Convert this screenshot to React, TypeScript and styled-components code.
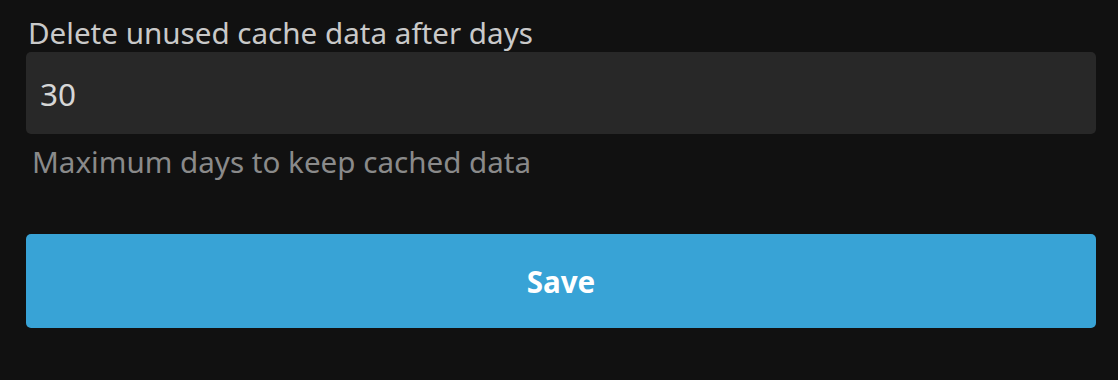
import styled, { createGlobalStyle } from 'styled-components'

const Global = createGlobalStyle`
html, body {
margin: 0;
padding: 0;
background-color: #111111;
}
body {
font-family: "Noto Sans", "Open Sans", sans-serif;
}
`

const Page = styled.div`
width: 1118px;
height: 380px;
box-sizing: border-box;
padding: 13px 22px 0 26px;
display: flex;
flex-direction: column;
`

const Field = styled.div`
display: flex;
flex-direction: column;
`

const Label = styled.label`
font-size: 29.6px;
line-height: 39px;
color: #c9c9c9;
padding-left: 2px;
`

const Input = styled.input`
height: 82px;
box-sizing: border-box;
border: none;
border-radius: 5px;
background-color: #282828;
color: #d6d6d6;
font-family: inherit;
font-size: 31.5px;
padding: 0 14px;
outline: none;
`

const Hint = styled.div`
font-size: 29.6px;
line-height: 39px;
color: #8a8a8a;
padding-left: 6px;
margin-top: 8px;
`

const SaveButton = styled.button`
margin-top: 53px;
height: 94px;
border: none;
border-radius: 5px;
background-color: #38a3d6;
color: #ffffff;
font-family: inherit;
font-size: 29.6px;
font-weight: 700;
cursor: pointer;
`

const App: React.FC = () => {
  return (
    <>
      <Global />
      <Page>
        <Field>
          <Label>Delete unused cache data after days</Label>
          <Input defaultValue="30" />
          <Hint>Maximum days to keep cached data</Hint>
        </Field>
        <SaveButton>Save</SaveButton>
      </Page>
    </>
  )
}

export default App
